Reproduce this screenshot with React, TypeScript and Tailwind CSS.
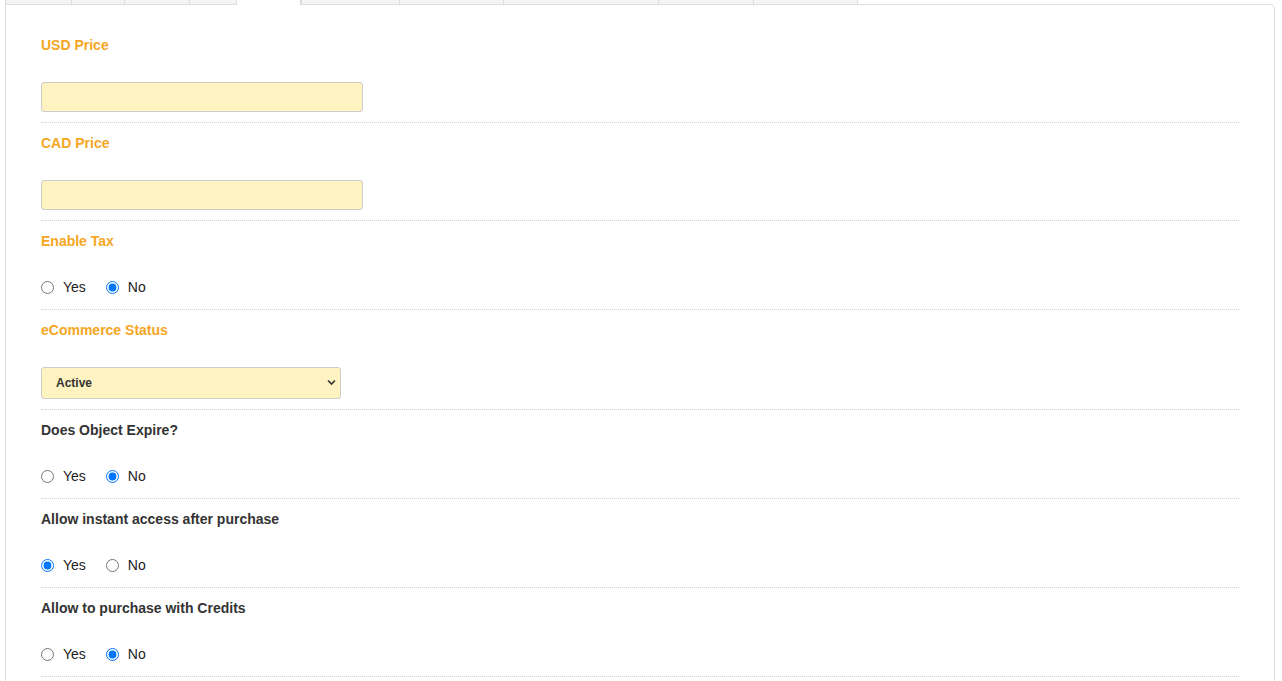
import React from 'react';

const TABS = [66, 53, 65, 47, 65, 98, 104, 155, 95, 105];
const ACTIVE_TAB = 4;

type Row =
  | { kind: 'input'; label: string; accent?: boolean }
  | { kind: 'select'; label: string; value: string; accent?: boolean }
  | { kind: 'radio'; label: string; value: 'yes' | 'no'; accent?: boolean };

const ROWS: Row[] = [
  { kind: 'input', label: 'USD Price', accent: true },
  { kind: 'input', label: 'CAD Price', accent: true },
  { kind: 'radio', label: 'Enable Tax', value: 'no', accent: true },
  { kind: 'select', label: 'eCommerce Status', value: 'Active', accent: true },
  { kind: 'radio', label: 'Does Object Expire?', value: 'no' },
  { kind: 'radio', label: 'Allow instant access after purchase', value: 'yes' },
  { kind: 'radio', label: 'Allow to purchase with Credits', value: 'no' },
];

function Radio({ checked }: { checked: boolean }) {
  return (
    <input
      type="radio"
      readOnly
      checked={checked}
      className="m-0 h-[13px] w-[13px] accent-[#0075ff]"
    />
  );
}

function FieldRow({ row }: { row: Row }) {
  return (
    <div className="border-b border-dotted border-[#d4d4d4] pt-[11px] pb-[10px]">
      <div
        className={`h-[18px] text-[14px] leading-[18px] font-bold ${
          row.accent ? 'text-[#f5a623]' : 'text-[#333333]'
        }`}
      >
        {row.label}
      </div>

      {row.kind === 'input' && (
        <input
          type="text"
          className="mt-[28px] block h-[30px] w-[322px] rounded-[3px] border border-[#cccccc] bg-[#fff3c1] px-2 text-[13px] outline-none"
        />
      )}

      {row.kind === 'select' && (
        <div className="relative mt-[28px] h-[32px] w-[300px]">
          <div className="flex h-full w-full items-center rounded-[3px] border border-[#cccccc] bg-[#fff3c1] pl-[14px] text-[12px] font-bold text-[#333333]">
            {row.value}
          </div>
          <svg
            className="absolute right-[5px] top-[12px]"
            width="9"
            height="7"
            viewBox="0 0 9 7"
            fill="none"
          >
            <path d="M1 1.5 L4.5 5 L8 1.5" stroke="#333" strokeWidth="1.6" />
          </svg>
        </div>
      )}

      {row.kind === 'radio' && (
        <div className="mt-[28px] mb-[3px] flex h-[18px] items-center text-[14px] text-[#222222]">
          <label className="flex items-center">
            <Radio checked={row.value === 'yes'} />
            <span className="ml-[9px]">Yes</span>
          </label>
          <label className="ml-[20px] flex items-center">
            <Radio checked={row.value === 'no'} />
            <span className="ml-[9px]">No</span>
          </label>
        </div>
      )}
    </div>
  );
}

export default function App() {
  return (
    <div
      className="min-h-screen bg-white"
      style={{ fontFamily: '"Liberation Sans", Arial, Helvetica, sans-serif' }}
    >
      <div className="pl-[5px] pr-[7px]">
        {/* tab strip, only its bottom edge is in view */}
        <div className="flex h-[4px]">
          {TABS.map((w, i) => (
            <div
              key={i}
              style={{ width: w }}
              className={
                i === ACTIVE_TAB
                  ? 'relative z-10 -mb-[1px] h-[5px] border-x border-[#dddddd] bg-white'
                  : 'h-[4px] border-l border-[#dddddd] bg-[#f4f4f4] last:border-r'
              }
            />
          ))}
        </div>

        {/* panel */}
        <div className="rounded-tr-[5px] border border-[#dddddd] px-[35px] pt-[20px]">
          {ROWS.map((row) => (
            <FieldRow key={row.label} row={row} />
          ))}
          <div className="h-[40px]" />
        </div>
      </div>
    </div>
  );
}
